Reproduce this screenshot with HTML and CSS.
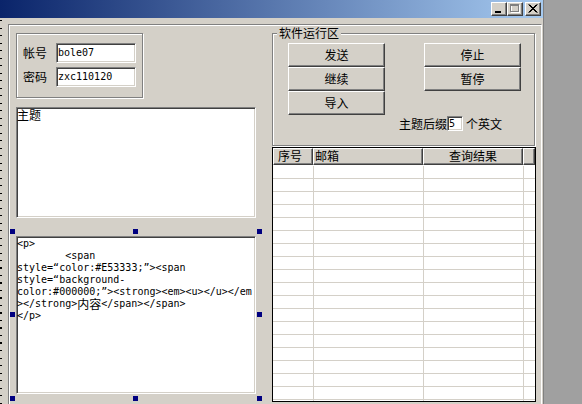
FILE: index.html
```html
<!DOCTYPE html>
<html>
<head>
<meta charset="utf-8">
<link rel="stylesheet" href="styles.css">
</head>
<body>
<div class="window">
  <div class="titlebar">
    <span class="cbtn"><svg width="14" height="12" viewBox="0 0 14 12"><rect x="3" y="8" width="6" height="2" fill="#000"/></svg></span>
    <span class="cbtn max"><svg width="14" height="12" viewBox="0 0 14 12"><rect x="3.5" y="2.5" width="8" height="7" fill="none" stroke="#fff"/><rect x="2.5" y="1.5" width="8" height="7" fill="none" stroke="#808080"/><rect x="2" y="1" width="9" height="2" fill="#808080"/></svg></span>
    <span class="cbtn"><svg width="14" height="12" viewBox="0 0 14 12"><path d="M2.5 1.5 L10.5 9.5 M3.5 1.5 L11.5 9.5 M10.5 1.5 L2.5 9.5 M11.5 1.5 L3.5 9.5" stroke="#000" stroke-width="1" fill="none"/></svg></span>
  </div>
  <div class="client">
    <div class="gutter"></div>
    <div class="form">
      <div class="left">
        <div class="login etched">
          <div class="row"><span class="lbl">帐号</span><div class="edit">bole07</div></div>
          <div class="row"><span class="lbl">密码</span><div class="edit">zxc110120</div></div>
        </div>
        <div class="memo subject">主题</div>
        <div class="selwrap">
          <div class="memo content"><div class="ln">&lt;p&gt;</div><div class="ln">        &lt;span</div><div class="ln">style=“color:#E53333;”&gt;&lt;span</div><div class="ln">style=“background-</div><div class="ln">color:#000000;”&gt;&lt;strong&gt;&lt;em&gt;&lt;u&gt;&lt;/u&gt;&lt;/em</div><div class="ln">&gt;&lt;/strong&gt;<span class="cjk">内容</span>&lt;/span&gt;&lt;/span&gt;</div><div class="ln">&lt;/p&gt;</div></div>
          <span class="h h-tl"></span><span class="h h-tc"></span><span class="h h-tr"></span>
          <span class="h h-ml"></span><span class="h h-mr"></span>
          <span class="h h-bl"></span><span class="h h-bc"></span><span class="h h-br"></span>
        </div>
      </div>
      <div class="right">
        <div class="group etched">
          <span class="legend">软件运行区</span>
          <div class="btns">
            <div class="btn">发送</div>
            <div class="btn">停止</div>
            <div class="btn">继续</div>
            <div class="btn">暂停</div>
            <div class="btn">导入</div>
          </div>
          <div class="suffix">
            <span class="slbl">主题后缀</span><div class="sedit">5</div><span class="safter">个英文</span>
          </div>
        </div>
        <div class="tbl">
          <div class="thead">
            <div class="th th1">序号</div>
            <div class="th th2">邮箱</div>
            <div class="th th3">查询结果</div>
            <div class="th"></div>
          </div>
          <div class="tbody">
            <div class="tr"><i></i><i></i><i></i><i></i></div>
            <div class="tr"><i></i><i></i><i></i><i></i></div>
            <div class="tr"><i></i><i></i><i></i><i></i></div>
            <div class="tr"><i></i><i></i><i></i><i></i></div>
            <div class="tr"><i></i><i></i><i></i><i></i></div>
            <div class="tr"><i></i><i></i><i></i><i></i></div>
            <div class="tr"><i></i><i></i><i></i><i></i></div>
            <div class="tr"><i></i><i></i><i></i><i></i></div>
            <div class="tr"><i></i><i></i><i></i><i></i></div>
            <div class="tr"><i></i><i></i><i></i><i></i></div>
            <div class="tr"><i></i><i></i><i></i><i></i></div>
            <div class="tr"><i></i><i></i><i></i><i></i></div>
            <div class="tr"><i></i><i></i><i></i><i></i></div>
            <div class="tr"><i></i><i></i><i></i><i></i></div>
            <div class="tr"><i></i><i></i><i></i><i></i></div>
            <div class="tr"><i></i><i></i><i></i><i></i></div>
            <div class="tr"><i></i><i></i><i></i><i></i></div>
            <div class="tr"><i></i><i></i><i></i><i></i></div>
            <div class="tr"><i></i><i></i><i></i><i></i></div>
          </div>
        </div>
      </div>
    </div>
  </div>
</div>
</body>
</html>
```
FILE: styles.css
```css
html, body {
  margin: 0;
  padding: 0;
}
body {
  background: #a0a0a0;
  font-family: "Noto Sans CJK SC", "Liberation Sans", sans-serif;
  font-size: 12px;
  color: #000;
}
.window {
  width: 544px;
  height: 404px;
  box-sizing: border-box;
  border-right: 1px solid #808080;
  background: #d4d0c8;
  overflow: hidden;
  display: flex;
  flex-direction: column;
}
.titlebar {
  flex: none;
  height: 18px;
  box-sizing: border-box;
  padding: 2px 2px 0 0;
  background: linear-gradient(to right, #0a246a, #a6caf0);
  display: flex;
  justify-content: flex-end;
  align-items: flex-start;
}
.cbtn {
  width: 16px;
  height: 14px;
  box-sizing: border-box;
  background: #d4d0c8;
  border: 1px solid;
  border-color: #fff #404040 #404040 #fff;
  box-shadow: inset -1px -1px #808080;
  display: block;
}
.cbtn svg {
  display: block;
}
.cbtn.max {
  margin-right: 2px;
}
.client {
  flex: 1;
  display: flex;
  padding: 6px 1px 0 0;
  min-height: 0;
}
.gutter {
  flex: none;
  width: 8px;
  margin-top: -6px;
  background-image: repeating-linear-gradient(to bottom, #000 0 1px, transparent 1px 7.5px);
  background-size: 2px 100%;
  background-repeat: no-repeat;
  background-position: 0 2px;
}
.form {
  flex: 1;
  display: flex;
  gap: 16px;
  padding: 8px 0 0 7px;
  border-top: 1px solid #808080;
  border-left: 1px solid #808080;
  border-right: 1px solid #fff;
  box-shadow: inset 1px 1px #fff;
}
.etched {
  border: 1px solid #808080;
  box-shadow: inset 1px 1px #fff, 1px 1px #fff;
}
.left {
  width: 240px;
  flex: none;
  display: flex;
  flex-direction: column;
}
.login {
  width: 127px;
  height: 65px;
  box-sizing: border-box;
  padding: 9px 0 0 6px;
  display: flex;
  flex-direction: column;
  gap: 4px;
}
.row {
  display: flex;
  align-items: center;
  height: 20px;
}
.lbl {
  width: 24px;
  margin-right: 9px;
  line-height: 14px;
  white-space: nowrap;
}
.edit, .sedit, .memo {
  background: #fff;
  box-sizing: border-box;
  border: 1px solid;
  border-color: #808080 #fff #fff #808080;
  box-shadow: inset 1px 1px #404040, inset -1px -1px #d4d0c8;
}
.edit {
  width: 80px;
  height: 20px;
  padding-left: 1px;
  font: 10px/18px "DejaVu Sans Mono", "Liberation Mono", monospace;
}
.subject {
  margin-top: 9px;
  height: 111px;
  line-height: 14px;
}
.selwrap {
  position: relative;
  margin-top: 18px;
}
.content {
  height: 158px;
  padding: 1px 0 0 0;
  font: 10px/12px "DejaVu Sans Mono", "Liberation Mono", monospace;
  overflow: hidden;
}
.ln {
  height: 12px;
  white-space: pre;
  display: flex;
  align-items: center;
}
.cjk {
  font-family: "Noto Sans CJK SC", sans-serif;
  font-size: 12px;
  line-height: 12px;
}
.h {
  position: absolute;
  width: 5px;
  height: 5px;
  background: #000080;
}
.h-tl, .h-tc, .h-tr { top: -7px; }
.h-ml, .h-mr { top: 76px; }
.h-bl, .h-bc, .h-br { top: 160px; }
.h-tl, .h-ml, .h-bl { left: -6px; }
.h-tc, .h-bc { left: 117px; }
.h-tr, .h-mr, .h-br { left: 241px; }
.right {
  width: 264px;
  flex: none;
  display: flex;
  flex-direction: column;
}
.group {
  position: relative;
  width: 263px;
  height: 113px;
  box-sizing: border-box;
  padding: 9px 0 0 15px;
}
.legend {
  position: absolute;
  top: -8px;
  left: 4px;
  padding: 0 2px;
  background: #d4d0c8;
  line-height: 14px;
}
.btns {
  display: grid;
  grid-template-columns: 97px 97px;
  column-gap: 39px;
  grid-auto-rows: 24px;
}
.btn {
  box-sizing: border-box;
  background: #d4d0c8;
  border: 1px solid;
  border-color: #fff #404040 #404040 #fff;
  box-shadow: inset -1px -1px #808080;
  display: flex;
  align-items: center;
  justify-content: center;
  line-height: 14px;
}
.suffix {
  display: flex;
  align-items: center;
  height: 15px;
  margin: 1px 0 0 111px;
}
.slbl {
  width: 48px;
  white-space: nowrap;
  line-height: 14px;
}
.sedit {
  width: 16px;
  height: 15px;
  padding-left: 1px;
  font: 10px/13px "DejaVu Sans Mono", "Liberation Mono", monospace;
}
.safter {
  margin-left: 3px;
  line-height: 14px;
}
.tbl {
  margin-top: 1px;
  height: 255px;
  box-sizing: border-box;
  border: 1px solid #000;
  background: #fff;
  overflow: hidden;
}
.thead, .tr {
  display: grid;
  grid-template-columns: 40px 110px 100px 12px;
}
.thead {
  height: 17px;
}
.th {
  box-sizing: border-box;
  background: #d4d0c8;
  border: 1px solid;
  border-color: #fff #404040 #404040 #fff;
  box-shadow: inset -1px -1px #808080;
  line-height: 14px;
  white-space: nowrap;
  overflow: hidden;
}
.th1 { padding-left: 4px; }
.th2 { padding-left: 1px; }
.th3 { text-align: center; }
.tbody {
  padding-top: 1px;
}
.tr {
  height: 13px;
}
.tr i {
  box-sizing: border-box;
  border-bottom: 1px solid #d4d0c8;
}
.tr i + i {
  border-left: 1px solid #d4d0c8;
}
```
